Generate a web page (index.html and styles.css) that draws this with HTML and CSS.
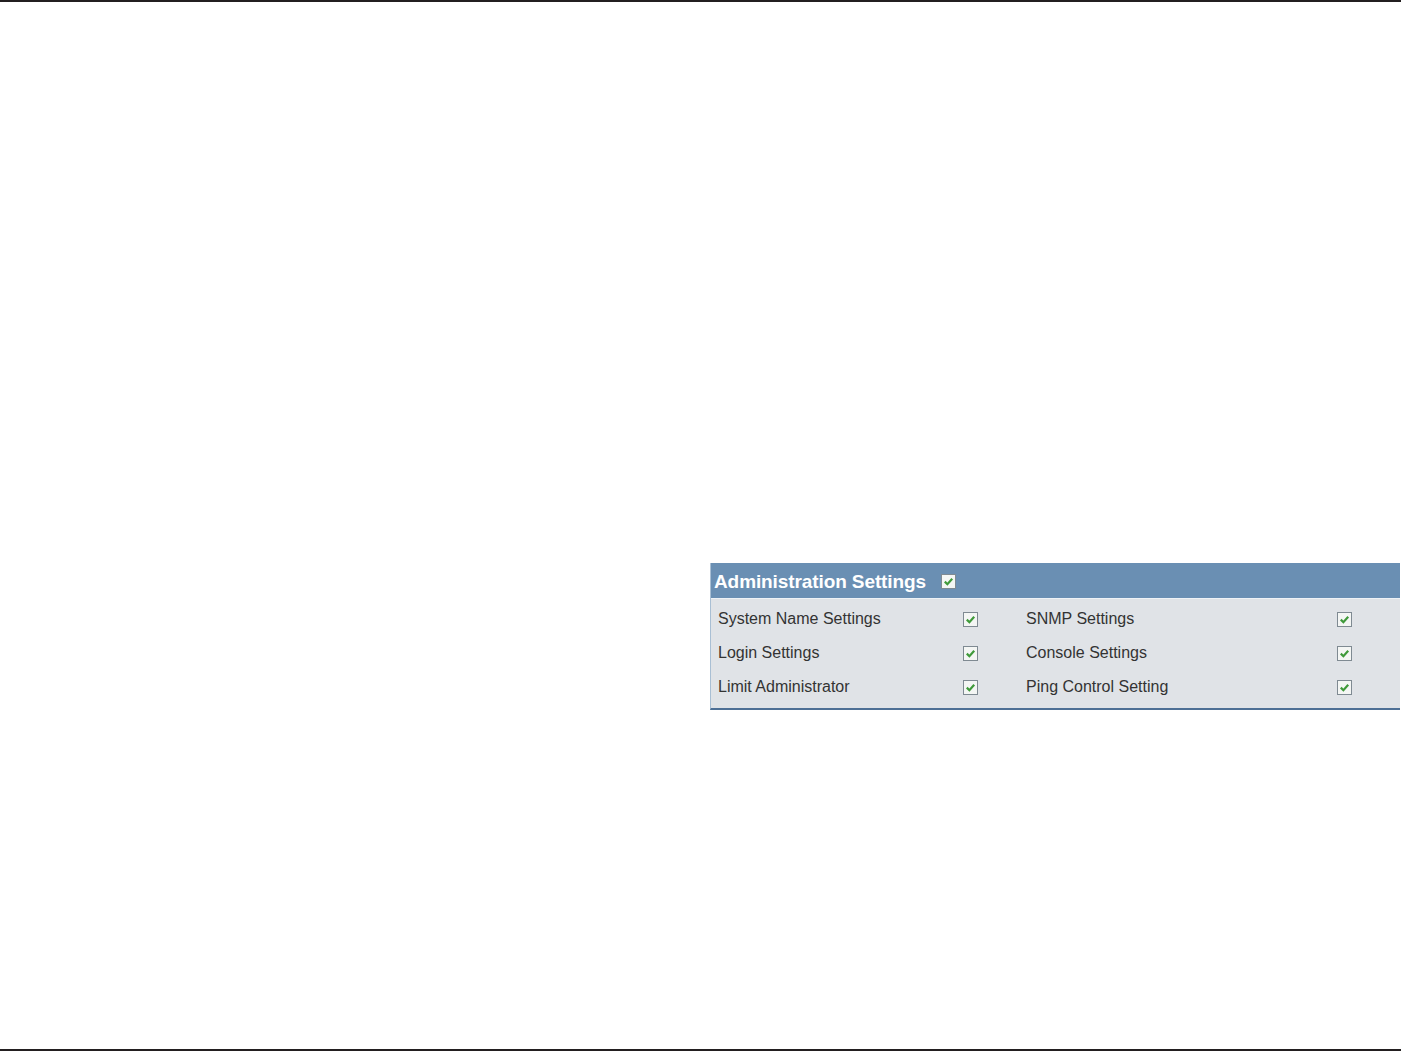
FILE: index.html
```html
<!DOCTYPE html>
<html lang="en">
<head>
  <meta charset="UTF-8">
  <title>Administration Settings</title>
  <link rel="stylesheet" href="styles.css">
</head>
<body>
  <div class="page">
    <div class="panel">
      <div class="panel-head">
        <span class="panel-title">Administration Settings</span>
        <span class="check">
          <svg viewBox="0 0 15 15" width="15" height="15"><rect x="0.5" y="0.5" width="14" height="14" fill="#f4f6f4" stroke="#7f8a92"/><path d="M3.8 7.6 L6.4 10.2 L11.2 4.8" fill="none" stroke="#3f9a3a" stroke-width="2.2"/></svg>
        </span>
      </div>
      <div class="panel-body">
        <span class="label">System Name Settings</span>
        <span class="check"><svg viewBox="0 0 15 15" width="15" height="15"><rect x="0.5" y="0.5" width="14" height="14" fill="#f4f6f4" stroke="#7f8a92"/><path d="M3.8 7.6 L6.4 10.2 L11.2 4.8" fill="none" stroke="#3f9a3a" stroke-width="2.2"/></svg></span>
        <span class="label">SNMP Settings</span>
        <span class="check"><svg viewBox="0 0 15 15" width="15" height="15"><rect x="0.5" y="0.5" width="14" height="14" fill="#f4f6f4" stroke="#7f8a92"/><path d="M3.8 7.6 L6.4 10.2 L11.2 4.8" fill="none" stroke="#3f9a3a" stroke-width="2.2"/></svg></span>

        <span class="label">Login Settings</span>
        <span class="check"><svg viewBox="0 0 15 15" width="15" height="15"><rect x="0.5" y="0.5" width="14" height="14" fill="#f4f6f4" stroke="#7f8a92"/><path d="M3.8 7.6 L6.4 10.2 L11.2 4.8" fill="none" stroke="#3f9a3a" stroke-width="2.2"/></svg></span>
        <span class="label">Console Settings</span>
        <span class="check"><svg viewBox="0 0 15 15" width="15" height="15"><rect x="0.5" y="0.5" width="14" height="14" fill="#f4f6f4" stroke="#7f8a92"/><path d="M3.8 7.6 L6.4 10.2 L11.2 4.8" fill="none" stroke="#3f9a3a" stroke-width="2.2"/></svg></span>

        <span class="label">Limit Administrator</span>
        <span class="check"><svg viewBox="0 0 15 15" width="15" height="15"><rect x="0.5" y="0.5" width="14" height="14" fill="#f4f6f4" stroke="#7f8a92"/><path d="M3.8 7.6 L6.4 10.2 L11.2 4.8" fill="none" stroke="#3f9a3a" stroke-width="2.2"/></svg></span>
        <span class="label">Ping Control Setting</span>
        <span class="check"><svg viewBox="0 0 15 15" width="15" height="15"><rect x="0.5" y="0.5" width="14" height="14" fill="#f4f6f4" stroke="#7f8a92"/><path d="M3.8 7.6 L6.4 10.2 L11.2 4.8" fill="none" stroke="#3f9a3a" stroke-width="2.2"/></svg></span>
      </div>
    </div>
  </div>
</body>
</html>
```
FILE: styles.css
```css
body {
  margin: 0;
  background: #fff;
  font-family: Tahoma, "Liberation Sans", Arial, sans-serif;
}

.page {
  box-sizing: border-box;
  height: 1051px;
  border-top: 2px solid #231f20;
  border-bottom: 2px solid #231f20;
  padding: 561px 1px 0 710px;
}

.panel {
  border-left: 1px solid #a9bfd4;
  border-bottom: 2px solid #4d6f95;
  background: #e0e3e7;
}

.panel-head {
  display: flex;
  align-items: center;
  height: 36px;
  padding: 2px 0 0 3px;
  background: #6a8fb3;
  border-bottom: 1px solid #eef2f6;
  box-sizing: border-box;
}

.panel-title {
  color: #fff;
  font-size: 19px;
  font-weight: bold;
  letter-spacing: -0.1px;
  margin-right: 15px;
}

.check {
  display: flex;
  width: 15px;
  height: 15px;
}

.panel-body {
  display: grid;
  grid-template-columns: 245px 63px 311px auto;
  grid-auto-rows: 34px;
  align-items: center;
  padding: 3px 0 4px 7px;
  font-size: 16px;
  color: #333;
}
```
